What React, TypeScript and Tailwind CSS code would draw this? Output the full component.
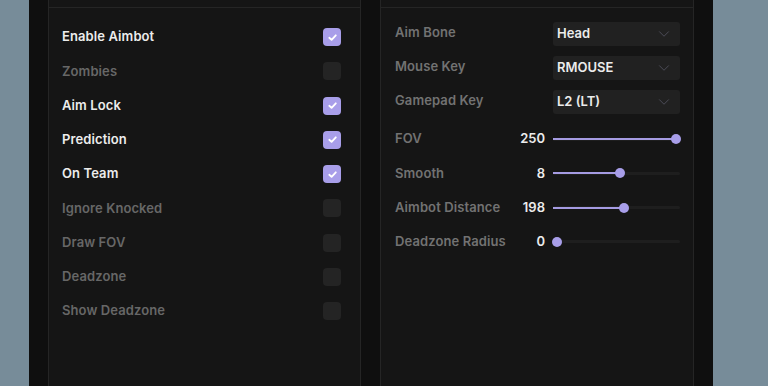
import { ChevronDown } from 'lucide-react';

const toggles = [
    { label: 'Enable Aimbot', on: true },
    { label: 'Zombies', on: false },
    { label: 'Aim Lock', on: true },
    { label: 'Prediction', on: true },
    { label: 'On Team', on: true },
    { label: 'Ignore Knocked', on: false },
    { label: 'Draw FOV', on: false },
    { label: 'Deadzone', on: false },
    { label: 'Show Deadzone', on: false },
];

const selects = [
    { label: 'Aim Bone', value: 'Head' },
    { label: 'Mouse Key', value: 'RMOUSE' },
    { label: 'Gamepad Key', value: 'L2 (LT)' },
];

const sliders = [
    { label: 'FOV', value: 250, max: 250 },
    { label: 'Smooth', value: 8, max: 15 },
    { label: 'Aimbot Distance', value: 198, max: 350 },
    { label: 'Deadzone Radius', value: 0, max: 100 },
];

function Checkbox({ on }: { on: boolean }) {
    if (!on) return <div className="w-[18px] h-[18px] rounded-[4px] bg-[#242424]" />;
    return (
        <div className="w-[18px] h-[18px] rounded-[4px] bg-[#a89ee9] flex items-center justify-center">
            <svg width="11" height="11" viewBox="0 0 12 12" fill="none">
                <path d="M2.5 6.3 L5 8.6 L9.6 3.6" stroke="white" strokeWidth="2" strokeLinecap="round" strokeLinejoin="round" />
            </svg>
        </div>
    );
}

function Slider({ value, max }: { value: number; max: number }) {
    const pct = (value / max) * 100;
    return (
        <div className="relative w-[127px] h-[12px] flex items-center">
            <div className="absolute left-0 right-0 h-[3px] rounded-full bg-[#1e1e1e]" />
            <div className="absolute left-[4px] right-[4px] h-[12px]">
                <div
                    className="absolute left-[-4px] top-[5px] h-[2px] bg-[#a59be2]"
                    style={{ width: `calc(${pct}% + 4px)` }}
                />
                <div
                    className="absolute top-px w-[10px] h-[10px] -ml-[5px] rounded-full bg-[#a89ee9]"
                    style={{ left: `${pct}%` }}
                />
            </div>
        </div>
    );
}

export default function App() {
    return (
        <div
            className="h-[386px] w-[768px] overflow-hidden bg-[#778c99] pl-[29px]"
            style={{ fontFamily: 'Inter, "Noto Sans", sans-serif' }}
        >
            <div className="w-[684px] h-[460px] -mt-[40px] bg-[#0f0f0f] px-[19px] flex gap-[19px]">
                {/* Left panel: toggles */}
                <div className="w-[313px] shrink-0 bg-[#151515] border border-[#252525]">
                    <div className="h-[47px] border-b border-[#252525]" />
                    <div className="pt-[12px]">
                        {toggles.map((t) => (
                            <div key={t.label} className="h-[34.25px] flex items-center justify-between pl-[13px] pr-[19px]">
                                <span
                                    className={`text-[13px] font-semibold tracking-[0.1px] ${t.on ? 'text-[#ececec]' : 'text-[#676767]'}`}
                                >
                                    {t.label}
                                </span>
                                <Checkbox on={t.on} />
                            </div>
                        ))}
                    </div>
                </div>

                {/* Right panel: settings */}
                <div className="w-[314px] shrink-0 bg-[#151515] border border-[#252525]">
                    <div className="h-[47px] border-b border-[#252525]" />
                    <div className="pt-[9px]">
                        {selects.map((s) => (
                            <div key={s.label} className="h-[34px] flex items-center pl-[14px] pr-[13px]">
                                <span className="flex-1 text-[13px] font-semibold tracking-[0.1px] text-[#727272] -mt-[2px]">{s.label}</span>
                                <div className="w-[127px] h-[24px] rounded-[3px] bg-[#212121] flex items-center justify-between pl-[4px] pr-[7px]">
                                    <span className="text-[13px] font-semibold text-[#ececec]">{s.value}</span>
                                    <ChevronDown size={18} strokeWidth={1.2} className="text-[#50505c]" />
                                </div>
                            </div>
                        ))}
                        <div className="mt-[3px]">
                            {sliders.map((s) => (
                                <div key={s.label} className="h-[34.25px] flex items-center pl-[14px] pr-[13px]">
                                    <span className="flex-1 text-[13px] font-semibold tracking-[0.1px] text-[#727272]">{s.label}</span>
                                    <span className="text-[13px] font-semibold text-[#ececec] mr-[8px]">{s.value}</span>
                                    <Slider value={s.value} max={s.max} />
                                </div>
                            ))}
                        </div>
                    </div>
                </div>
            </div>
        </div>
    );
}
